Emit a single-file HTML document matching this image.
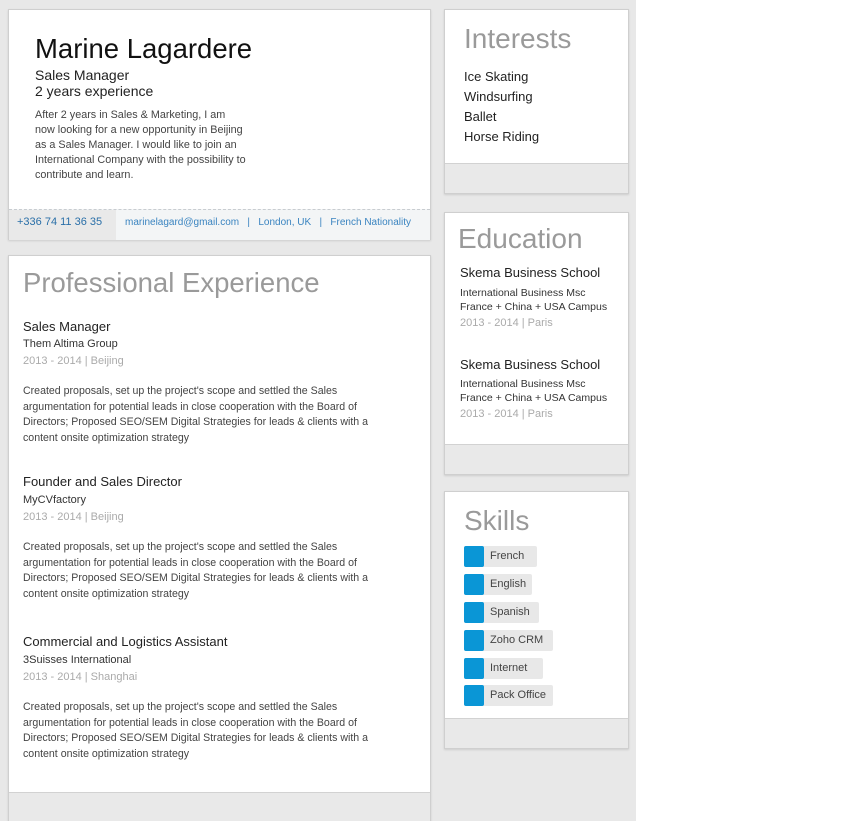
<!DOCTYPE html>
<html><head><meta charset="utf-8"><style>
*{margin:0;padding:0;box-sizing:border-box}
html,body{width:854px;height:821px;overflow:hidden}
body{background:#fff;font-family:"Liberation Sans",sans-serif;position:relative}
.bg{position:absolute;left:0;top:0;width:636px;height:821px;background:#e8e8e8}
.card{position:absolute;background:#fff;border:1px solid #cfcfcf;box-shadow:0 1px 2px rgba(0,0,0,.12)}
.foot{position:absolute;left:0;right:0;bottom:0;background:#e9e9e9;border-top:1px solid #d2d2d2}
.t{position:absolute;white-space:nowrap}
h2{position:absolute;font-weight:normal;color:#9a9a9a;white-space:nowrap}
.p{font-size:10.6px;color:#444;line-height:15.5px;white-space:normal}
.gy{color:#aaa;font-size:11px}
.sk{position:absolute;left:19px;height:21px;background:#e8e8e8;border-radius:2px;font-size:11px;color:#444;line-height:21px;padding-left:26px}
.sk:before{content:"";position:absolute;left:0;top:0;width:20px;height:21px;background:#0a96d6;border-radius:2px}
</style></head><body>
<div class="bg"></div>

<div class="card" style="left:8px;top:9px;width:423px;height:231px">
 <div class="t" style="left:26px;top:23px;font-size:27.5px;color:#111">Marine Lagardere</div>
 <div class="t" style="left:26px;top:57px;font-size:14px;color:#222">Sales Manager</div>
 <div class="t" style="left:26px;top:73px;font-size:14px;color:#222">2 years experience</div>
 <div class="t p" style="left:26px;top:98px;width:224px;font-size:10.8px;line-height:15px">After 2 years in Sales &amp; Marketing, I am<br>now looking for a new opportunity in Beijing<br>as a Sales Manager. I would like to join an<br>International Company with the possibility to<br>contribute and learn.</div>
 <div style="position:absolute;left:0;right:0;top:199px;height:31px;background:#f3f5f6;border-top:1px dashed #c8ccd0">
  <div style="position:absolute;left:0;top:0;width:107px;height:30px;background:#e9e9e9"></div>
  <div class="t" style="left:8px;top:6px;font-size:11px;color:#2a6fa8">+336 74 11 36 35</div>
  <div class="t" style="left:116px;top:7px;font-size:10px;color:#3a84c0">marinelagard@gmail.com &nbsp;&nbsp;| &nbsp;&nbsp;London, UK &nbsp;&nbsp;| &nbsp;&nbsp;French Nationality</div>
 </div>
</div>

<div class="card" style="left:8px;top:255px;width:423px;height:570px">
 <h2 style="left:14px;top:11px;font-size:27.5px">Professional Experience</h2>
 <div class="t" style="left:14px;top:63px;font-size:13px;color:#222">Sales Manager</div>
 <div class="t" style="left:14px;top:82px;font-size:11px;color:#333">Them Altima Group</div>
 <div class="t gy" style="left:14px;top:99px">2013 - 2014 | Beijing</div>
 <div class="t p" style="left:14px;top:128px;width:362px">Created proposals, set up the project's scope and settled the Sales argumentation for potential leads in close cooperation with the Board of Directors; Proposed SEO/SEM Digital Strategies for leads &amp; clients with a content onsite optimization strategy</div>
 <div class="t" style="left:14px;top:218px;font-size:13px;color:#222">Founder and Sales Director</div>
 <div class="t" style="left:14px;top:238px;font-size:11px;color:#333">MyCVfactory</div>
 <div class="t gy" style="left:14px;top:255px">2013 - 2014 | Beijing</div>
 <div class="t p" style="left:14px;top:284px;width:362px">Created proposals, set up the project's scope and settled the Sales argumentation for potential leads in close cooperation with the Board of Directors; Proposed SEO/SEM Digital Strategies for leads &amp; clients with a content onsite optimization strategy</div>
 <div class="t" style="left:14px;top:378px;font-size:13px;color:#222">Commercial and Logistics Assistant</div>
 <div class="t" style="left:14px;top:398px;font-size:11px;color:#333">3Suisses International</div>
 <div class="t gy" style="left:14px;top:415px">2013 - 2014 | Shanghai</div>
 <div class="t p" style="left:14px;top:444px;width:362px">Created proposals, set up the project's scope and settled the Sales argumentation for potential leads in close cooperation with the Board of Directors; Proposed SEO/SEM Digital Strategies for leads &amp; clients with a content onsite optimization strategy</div>
 <div class="foot" style="height:32px"></div>
</div>

<div class="card" style="left:444px;top:9px;width:185px;height:185px">
 <h2 style="left:19px;top:13px;font-size:28px">Interests</h2>
 <div class="t" style="left:19px;top:57px;font-size:13px;color:#222;line-height:20px">Ice Skating<br>Windsurfing<br>Ballet<br>Horse Riding</div>
 <div class="foot" style="height:30px"></div>
</div>

<div class="card" style="left:444px;top:212px;width:185px;height:263px">
 <h2 style="left:13px;top:10px;font-size:28px">Education</h2>
 <div class="t" style="left:15px;top:52px;font-size:13px;color:#222">Skema Business School</div>
 <div class="t" style="left:15px;top:73px;font-size:10.5px;color:#333;line-height:14px">International Business Msc<br>France + China + USA Campus</div>
 <div class="t gy" style="left:15px;top:104px">2013 - 2014 | Paris</div>
 <div class="t" style="left:15px;top:144px;font-size:13px;color:#222">Skema Business School</div>
 <div class="t" style="left:15px;top:164px;font-size:10.5px;color:#333;line-height:14px">International Business Msc<br>France + China + USA Campus</div>
 <div class="t gy" style="left:15px;top:195px">2013 - 2014 | Paris</div>
 <div class="foot" style="height:30px"></div>
</div>

<div class="card" style="left:444px;top:491px;width:185px;height:258px">
 <h2 style="left:19px;top:13px;font-size:28px">Skills</h2>
 <div class="sk" style="top:54px;width:73px">French</div>
 <div class="sk" style="top:82px;width:68px">English</div>
 <div class="sk" style="top:110px;width:75px">Spanish</div>
 <div class="sk" style="top:138px;width:89px">Zoho CRM</div>
 <div class="sk" style="top:166px;width:79px">Internet</div>
 <div class="sk" style="top:193px;width:89px">Pack Office</div>
 <div class="foot" style="height:30px"></div>
</div>
</body></html>
